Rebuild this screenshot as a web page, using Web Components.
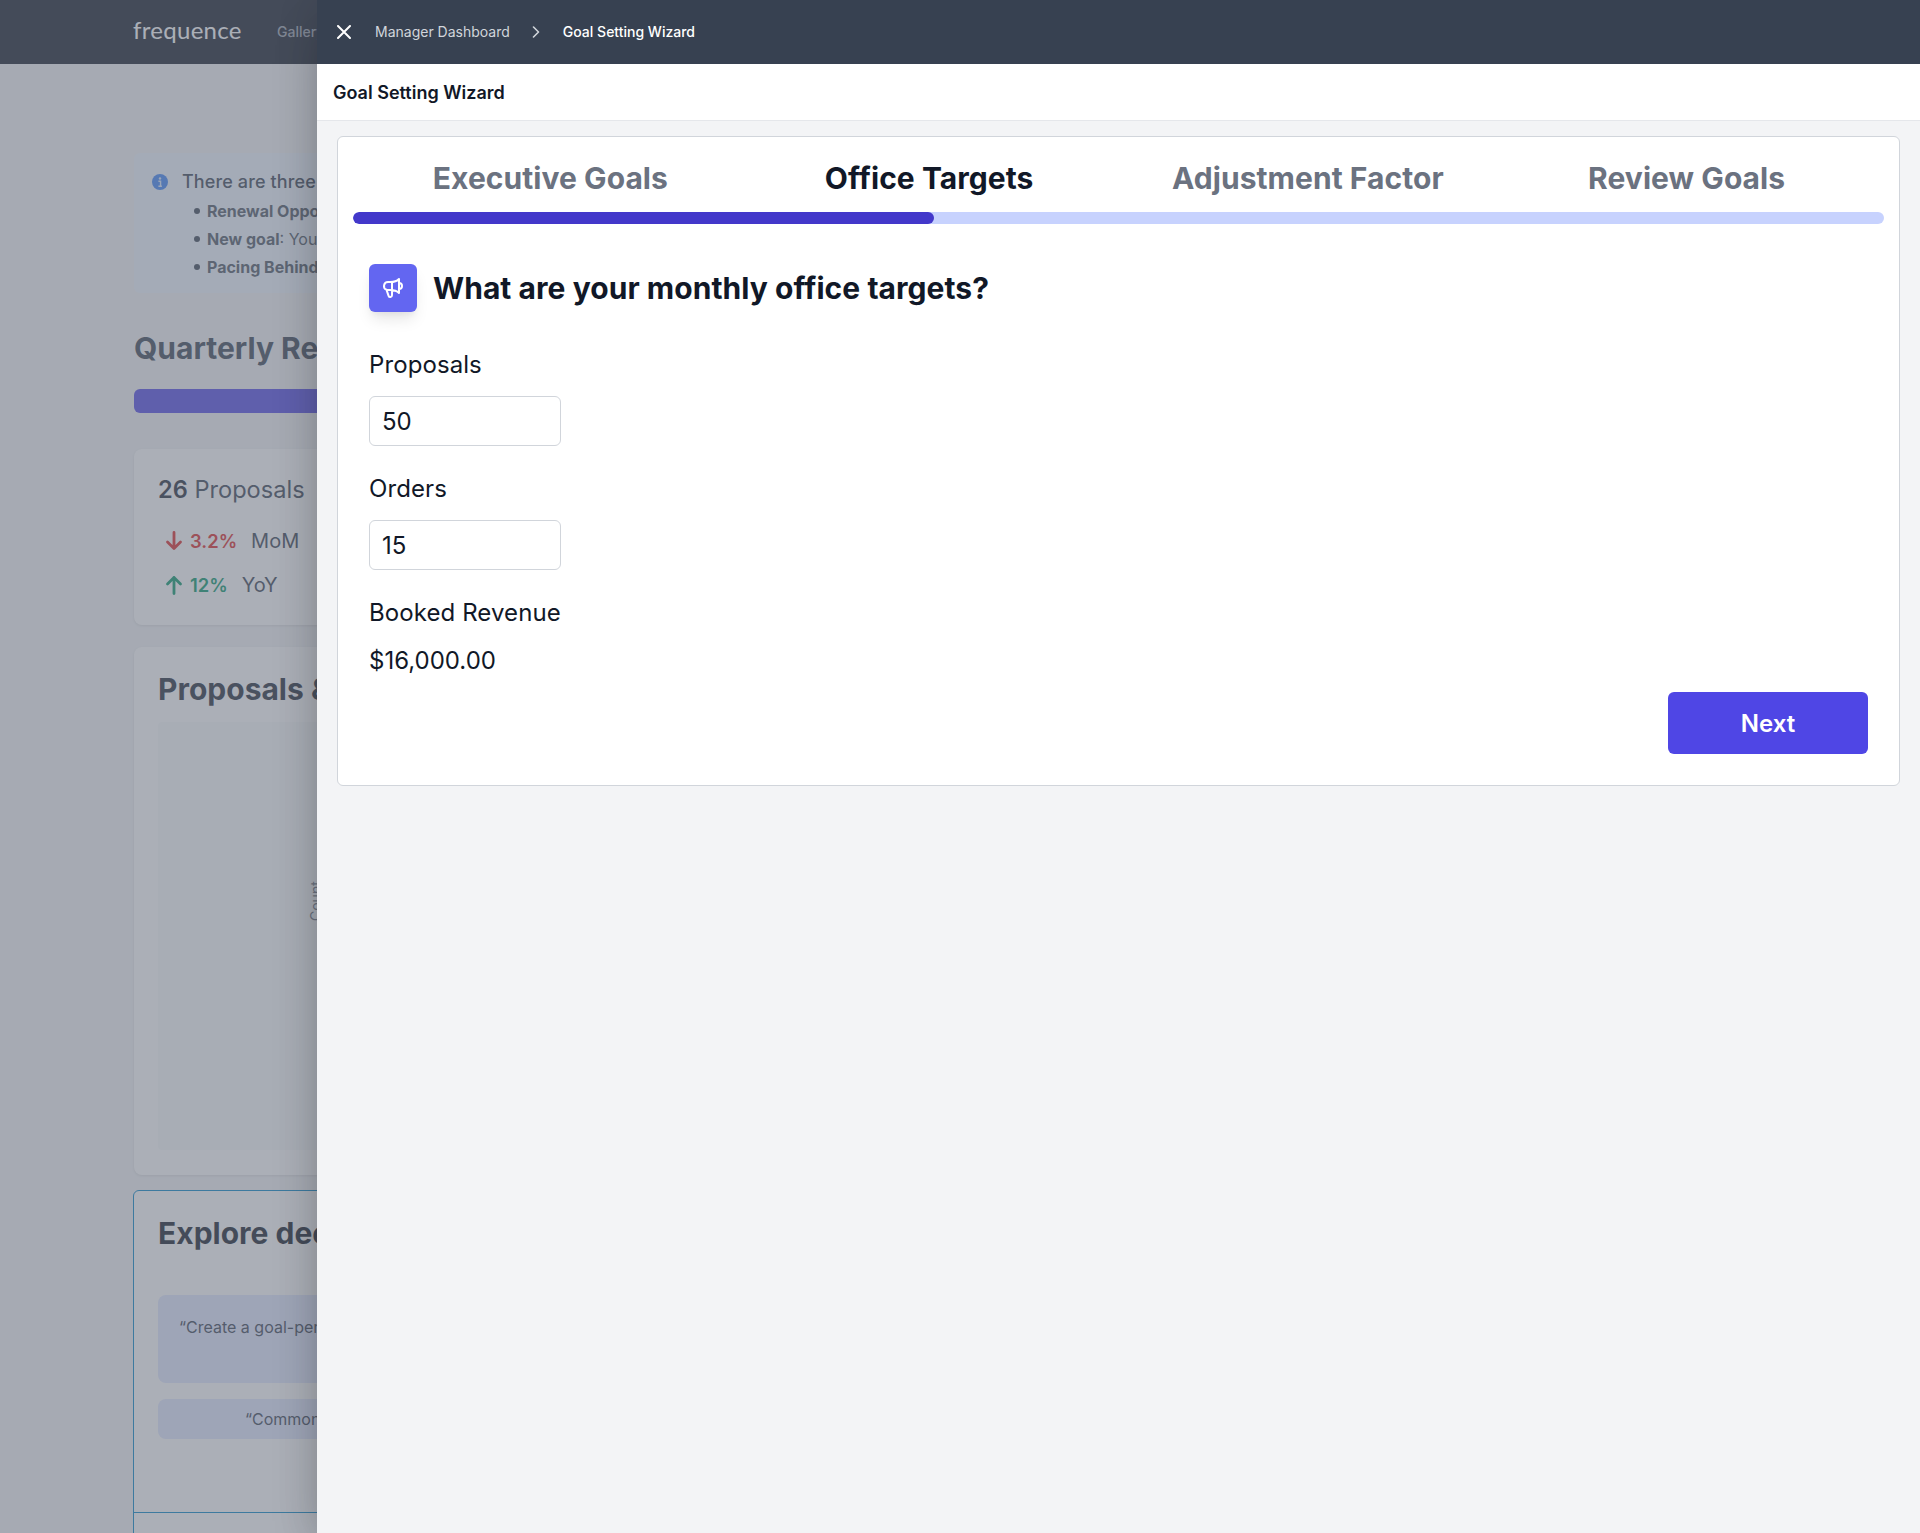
<!DOCTYPE html>
<html lang="en">
<head>
<meta charset="utf-8">
<title>Goal Setting Wizard</title>
<style>
html,body{margin:0;padding:0;height:1533px;overflow:hidden;background:#f3f4f6;font-family:Inter,"Liberation Sans",sans-serif}
body{position:relative}
</style>
</head>
<body>
<dash-page>
  <info-box>
    <span slot="title">There are three</span>
    <li><b>Renewal Opportunities</b></li>
    <li><b>New goal</b>: You</li>
    <li><b>Pacing Behind</b></li>
  </info-box>
  <stat-card slot="y" count="26" label="Proposals">
    <stat-row dir="down" value="3.2%" label="MoM"></stat-row>
    <stat-row dir="up" value="12%" label="YoY"></stat-row>
  </stat-card>
</dash-page>
<wizard-panel>
  <wizard-steps></wizard-steps>
  <wizard-head>What are your monthly office targets?</wizard-head>
  <form-field label="Proposals" value="50" input></form-field>
  <form-field label="Orders" value="15" input></form-field>
  <form-field label="Booked Revenue" value="$16,000.00"></form-field>
  <wizard-actions>Next</wizard-actions>
</wizard-panel>
<script>
function def(name, css, html){
  customElements.define(name, class extends HTMLElement{
    connectedCallback(){
      if(this.shadowRoot) return;
      const r=this.attachShadow({mode:'open'});
      const a=k=>this.getAttribute(k)||'';
      r.innerHTML='<style>'+css+'</style>'+(typeof html==='function'?html(a,this):html);
    }
  });
}
const FONT='font-family:Inter,"Liberation Sans",sans-serif;';

def('info-box',`
:host{display:block;background:#eff6ff;border-radius:6px;height:140px;box-sizing:border-box;padding:17px 0 0 18px;white-space:nowrap;color:#1f2937;${FONT}}
.t{display:flex;align-items:center;gap:14px;font-size:18px;line-height:24px;font-weight:500;color:#374151;letter-spacing:.12px}
svg{width:16px;height:16px;flex:none}
ul{margin:3px 0 0;padding:0 0 0 55px;list-style:none}
::slotted(li){font-size:16px;line-height:28px;color:#4b5563;display:block;position:relative}
::slotted(li)::before{content:"";position:absolute;left:-13px;top:11px;width:6px;height:6px;border-radius:50%;background:#374151}
`,`<div class="t"><svg viewBox="0 0 20 20"><circle cx="10" cy="10" r="10" fill="#3b82f6"/><circle cx="10" cy="5.6" r="1.5" fill="#dbeafe"/><path d="M8 9h2.7v6.2M8 15.2h4.4" stroke="#dbeafe" stroke-width="1.8" fill="none"/></svg><slot name="title"></slot></div>
<ul><slot></slot></ul>`);

def('stat-row',`
:host{display:flex;align-items:center;height:44px;font-size:20px;${FONT}}
svg{width:22px;height:22px;flex:none;margin:0 5px 0 5px}
b{font-weight:600;font-size:18.4px}
span{margin-left:14px;color:#374151}
.down{color:#dc2626}.up{color:#059669}
`,a=>{const d=a('dir');const p=d==='down'?'M11 2.5v16M4.5 12l6.5 6.5 6.5-6.5':'M11 19.5v-16M4.5 10l6.5-6.5 6.5 6.5';
return `<svg viewBox="0 0 22 22" fill="none" stroke="${d==='down'?'#dc2626':'#059669'}" stroke-width="2.8" stroke-linecap="round" stroke-linejoin="round"><path d="${p}"/></svg><b class="${d}">${a('value')}</b><span>${a('label')}</span>`});

def('stat-card',`
:host{display:block;background:#fff;border-radius:8px;box-shadow:0 1px 3px rgba(0,0,0,.1);height:176px;box-sizing:border-box;padding:25px 0 0 24px;${FONT}}
.h{font-size:23.6px;line-height:32px;color:#374151;margin-bottom:13px;white-space:nowrap}
b{font-weight:600;color:#1f2937}
`,a=>`<div class="h"><b>${a('count')}</b> ${a('label')}</div><slot></slot>`);

def('dash-nav',`
:host{display:flex;align-items:center;height:64px;background:#111827;padding-left:133px;color:#fff;white-space:nowrap;${FONT}}
.l{font-family:Lato,sans-serif;font-size:24px;font-weight:400;color:#fff;letter-spacing:.3px;width:144px;flex:none;margin-bottom:5px}
a{font-size:14px;color:#9ca3af;font-weight:500;margin-bottom:2px}
`,`<span class="l">frequence</span><a>Gallery</a>`);

def('chart-card',`
:host{display:block;background:#fff;border-radius:8px;box-shadow:0 1px 3px rgba(0,0,0,.1);height:528px;margin-top:22px;box-sizing:border-box;padding:24px;${FONT}}
h2{margin:0;font-size:30px;line-height:36px;font-weight:700;color:#1f2937;white-space:nowrap}
.c{height:428px;margin-top:15px;background:#f9fafb;border-radius:4px;position:relative}
.y{position:absolute;left:150px;top:199px;font-size:14px;line-height:16px;color:#6b7280;transform:rotate(-90deg);transform-origin:left top}
`,`<h2>Proposals &amp; Orders</h2><div class="c"><span class="y">Count</span></div>`);

def('explore-card',`
:host{display:block;background:#fff;border:1px solid #0284c7;border-radius:6px 6px 0 0;margin-top:15px;height:500px;box-sizing:border-box;padding:24px;${FONT};margin-left:-1px}
h2{margin:0;font-size:30px;line-height:36px;font-weight:700;color:#111827;white-space:nowrap}
.b{background:#e0e7ff;border-radius:8px;font-size:16px;color:#374151;white-space:nowrap}
.a{margin-top:44px;height:88px;padding:21px 0 0 21px;box-sizing:border-box;line-height:22px}
.d{margin-top:16px;height:40px;line-height:40px;padding-left:87px;box-sizing:border-box}
hr{border:0;border-top:1px solid #0284c7;margin:73px -24px 0}
`,`<h2>Explore deeper</h2><div class="b a">“Create a goal-performance</div><div class="b d">“Common</div><hr>`);

def('dash-page',`
:host{display:block;height:1533px;overflow:hidden;background:#f3f4f6;${FONT}}
main{padding:89px 134px 0}
h1{margin:0;font-size:30px;line-height:36px;font-weight:700;color:#374151;padding-top:37px;white-space:nowrap}
.bar{height:24px;background:#4f46e5;border-radius:6px;margin:23px 0 36px}
.ov{position:absolute;inset:0;background:rgba(107,114,128,.57)}
`,`<dash-nav></dash-nav><main><slot></slot><h1>Quarterly Review</h1><div class="bar"></div><slot name="y"></slot><chart-card></chart-card><explore-card></explore-card></main><div class="ov"></div>`);

def('wizard-bar',`
:host{display:flex;align-items:center;height:64px;background:#374151;padding-left:20px;font-size:14px;font-weight:400;${FONT}}
svg{flex:none}
a{color:#d1d5db;margin:0 0 2px 24px}
.c{margin:0 23px 0 22px}
b{font-weight:500;color:#fff;margin-bottom:2px}
`,`<svg width="14" height="14" viewBox="0 0 14 14" fill="none" stroke="#fff" stroke-width="2" stroke-linecap="round"><path d="M1 1l12 12M13 1L1 13"/></svg><a>Manager Dashboard</a><svg class="c" width="8" height="12" viewBox="0 0 8 12" fill="none" stroke="#d1d5db" stroke-width="1.6" stroke-linecap="round" stroke-linejoin="round"><path d="M1.5 1l5 5-5 5"/></svg><b>Goal Setting Wizard</b>`);

def('wizard-steps',`
:host{display:block;${FONT}}
.t{display:grid;grid-template-columns:repeat(4,1fr);padding:23px 8px 0}
.t span{text-align:center;font-size:30px;line-height:36px;font-weight:700;color:#6b7280;white-space:nowrap;letter-spacing:.05px}
.t .on{color:#111827}
.p{height:12px;background:#c7d2fe;border-radius:6px;margin-top:16px;overflow:hidden}
.p i{display:block;height:100%;width:37.95%;background:#4338ca;border-radius:6px}
`,`<div class="t"><span>Executive Goals</span><span class="on">Office Targets</span><span>Adjustment Factor</span><span>Review Goals</span></div><div class="p"><i></i></div>`);

def('wizard-head',`
:host{display:flex;align-items:center;gap:16px;margin:40px 16px 37px;${FONT}}
.i{width:48px;height:48px;border-radius:6px;background:#6366f1;box-shadow:0 10px 15px -3px rgba(0,0,0,.1),0 4px 6px -2px rgba(0,0,0,.05);display:flex;align-items:center;justify-content:center}
h2{margin:0;font-size:30px;line-height:36px;font-weight:700;color:#111827;white-space:nowrap;letter-spacing:.05px}
`,`<div class="i"><svg width="24" height="24" viewBox="0 0 24 24" fill="none" stroke="#fff" stroke-width="2" stroke-linecap="round" stroke-linejoin="round"><path d="M11 5.882V19.24a1.76 1.76 0 01-3.417.592l-2.147-6.15M18 13a3 3 0 100-6M5.436 13.683A4.001 4.001 0 017 6h1.832c4.1 0 7.625-1.234 9.168-3v14c-1.543-1.766-5.067-3-9.168-3H7a3.988 3.988 0 01-1.564-.317z"/></svg></div><h2><slot></slot></h2>`);

def('form-field',`
:host{display:block;margin:0 16px 27px;font-size:24px;line-height:32px;color:#111827;${FONT}}
.l{margin-bottom:15px;white-space:nowrap;letter-spacing:.09px}
.v{height:32px;padding-top:1px;margin-bottom:-1px}
.in{width:192px;height:50px;box-sizing:border-box;border:1px solid #d1d5db;border-radius:6px;padding:9px 12px;background:#fff}
`,(a,e)=>`<div class="l">${a('label')}</div><div class="${e.hasAttribute('input')?'in':'v'}">${a('value')}</div>`);

def('wizard-actions',`
:host{display:flex;justify-content:flex-end;padding:0 16px 30px;margin-top:-12px;${FONT}}
button{width:200px;height:62px;border:0;border-radius:6px;background:#4f46e5;color:#fff;font:600 24px/32px Inter,"Liberation Sans",sans-serif;padding:2px 0 0}
`,`<button><slot></slot></button>`);

def('wizard-panel',`
:host{position:absolute;left:317px;top:0;right:0;bottom:0;background:#f3f4f6;box-shadow:0 25px 50px -12px rgba(0,0,0,.25),0 0 40px rgba(0,0,0,.12);display:block;${FONT}}
.h{height:57px;box-sizing:border-box;background:#fff;border-bottom:1px solid #e5e7eb;padding:0 16px;display:flex;align-items:center;font-size:18px;font-weight:600;color:#111827}
.c{margin:15px 20px 0;background:#fff;border:1px solid #d1d5db;border-radius:6px;padding:0 15px;height:650px;box-sizing:border-box}
`,`<wizard-bar></wizard-bar><div class="h">Goal Setting Wizard</div><div class="c"><slot></slot></div>`);
</script>
</body>
</html>
